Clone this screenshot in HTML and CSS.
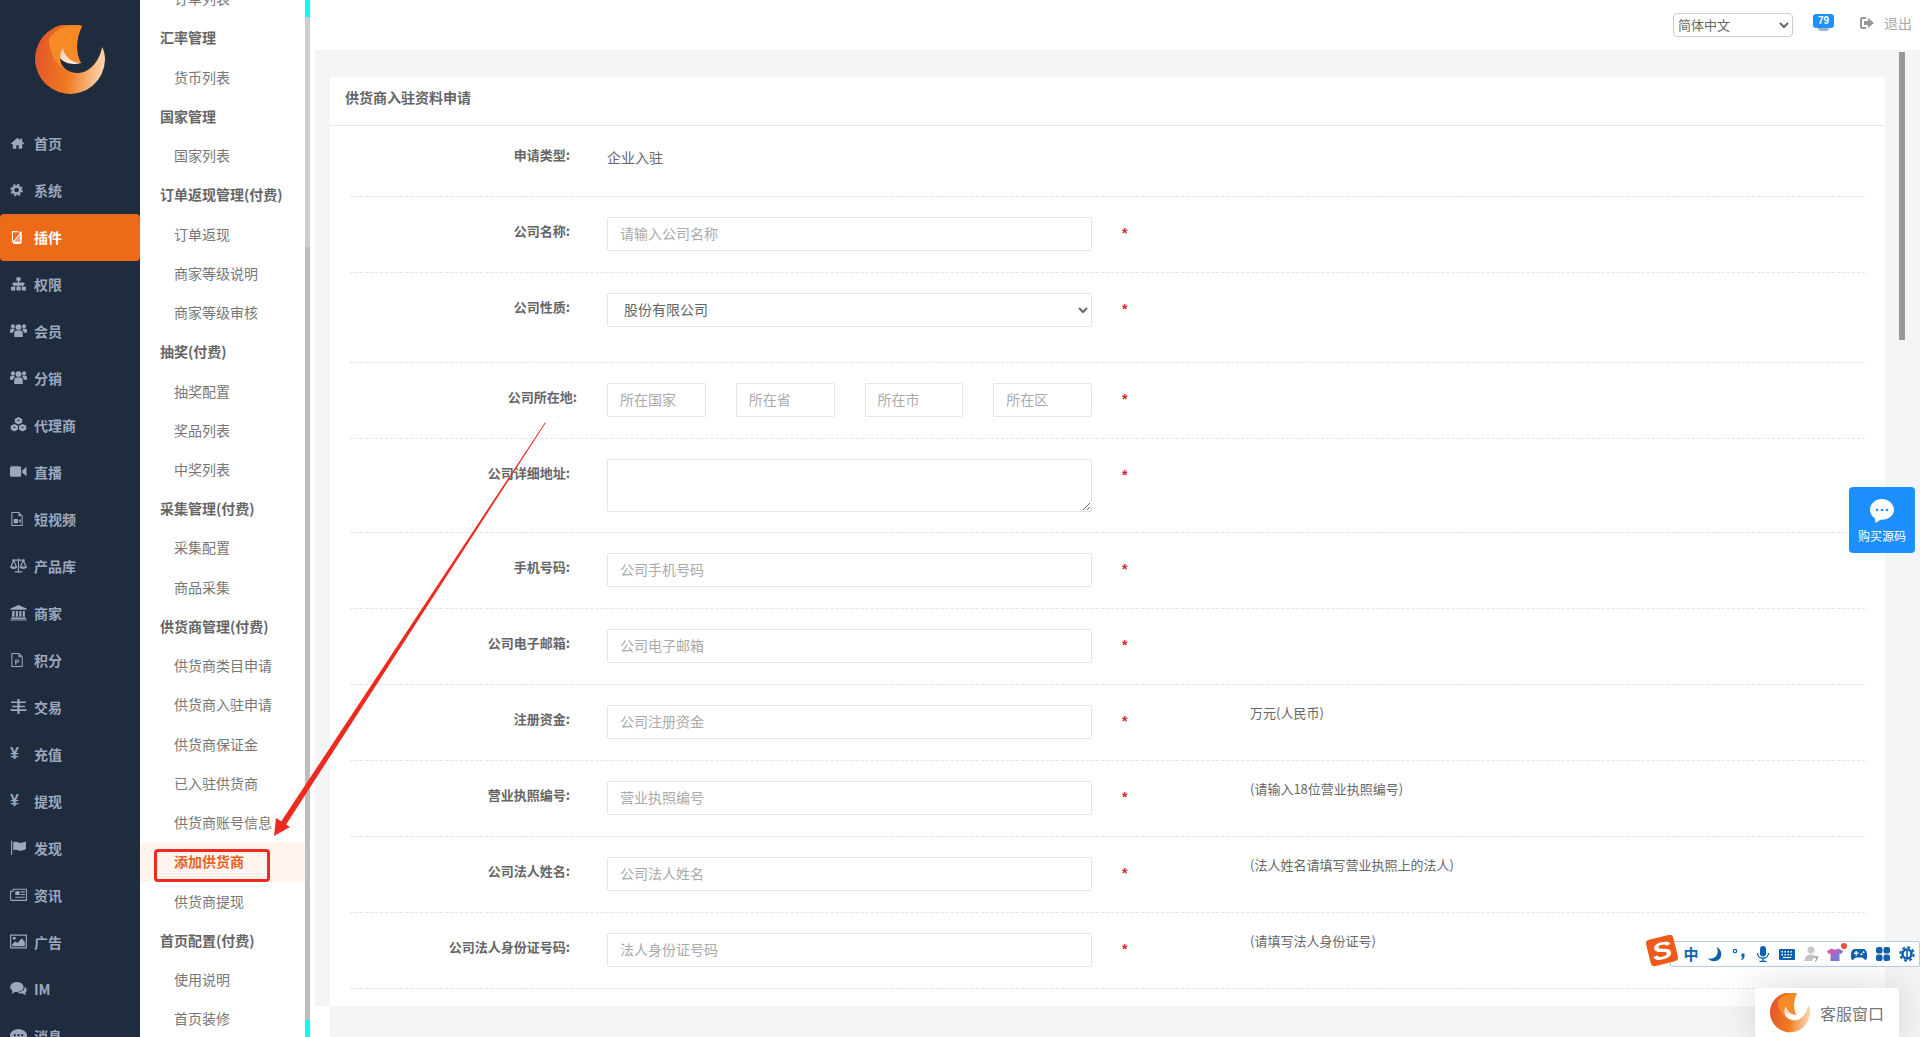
FILE: index.html
```html
<!DOCTYPE html>
<html lang="zh-CN">
<head>
    <meta charset="UTF-8">
    <title>供货商入驻资料申请</title>
    <link rel="stylesheet" href="styles.css">
</head>
<body>
    <svg class="defs" width="0" height="0">
        <defs>
            <linearGradient id="logoBase" x1="0" y1="0.6" x2="1" y2="0.75">
                <stop offset="0" stop-color="#e2582a"/>
                <stop offset="0.5" stop-color="#f07c20"/>
                <stop offset="1" stop-color="#fcdcbc"/>
            </linearGradient>
            <linearGradient id="logoFlame" x1="0" y1="0" x2="1" y2="0.7">
                <stop offset="0" stop-color="#f9c79b"/>
                <stop offset="1" stop-color="#fff2e4"/>
            </linearGradient>
            <linearGradient id="shirt" x1="0" y1="0" x2="1" y2="1">
                <stop offset="0" stop-color="#f0509a"/>
                <stop offset="1" stop-color="#4a8cf5"/>
            </linearGradient>
            <symbol id="logo" viewBox="0 0 70 70">
                <path fill="url(#logoBase)" d="M47 1A35 35 0 1 0 70 35C70 30 69 25 67 22C65 35 55 48 43 48C33 48 25 42 25 33C25 28 26 25 28 23C30 32 38 38 46 38C41 30 40 15 47 1Z"/>
                <path fill="#f68a24" d="M47 1C33 -2 20 4 14 14C14 30 24 48 43 48C33 48 25 42 25 33C25 28 26 25 28 23C30 32 38 38 46 38C41 30 40 15 47 1Z"/>
                <path fill="url(#logoFlame)" d="M28 23C30 32 38 38 46 38C38 40 30 39 25 33C25 28 26 25 28 23Z"/>
            </symbol>
        </defs>
    </svg>

    <div class="app">
        <aside class="side">
            <div class="side-logo"><svg class="logo-big"><use href="#logo"/></svg></div>
            <a class="side-item"><svg class="ico" viewBox="0 0 16 16"><path d="M8 2.500.8 8.600l.9 1L3 8.500V14h3.700v-3.600h2.600V14H13V8.500l1.300 1.100.9-1L13 6.700V3.200h-2v1.800z"/></svg>首页</a>
            <a class="side-item"><svg class="ico" viewBox="0 0 16 16"><circle cx="7" cy="8" r="3.800" fill="none" stroke="currentColor" stroke-width="2.600"/><circle cx="7" cy="8" r="5.800" fill="none" stroke="currentColor" stroke-width="1.800" stroke-dasharray="2.500 2.050"/></svg>系统</a>
            <a class="side-item active"><svg class="ico" viewBox="0 0 16 16"><path fill="#fff" d="M2 1.500h6l1 1h3.500V14l-2 1.500H4L3 13.500H2zm1 1.500V12h1l6-7.500V3z"/><path fill="#f39a74" d="M4.500 13 10.500 5.500 11 13z"/></svg>插件</a>
            <a class="side-item"><svg class="ico ico-wide" viewBox="0 0 16 16"><path d="M6 2h4v3.500H8.500V7H13.500v2.500H12.500V11H15v3.500h-4V11h.8V10H8.500v1H10v3.500H6V11h1.500V10H4.200v1H5v3.500H1V11h2.500V9.500h-1V7H7.500V5.500H6z"/></svg>权限</a>
            <a class="side-item"><svg class="ico ico-wide" viewBox="0 0 16 16"><circle cx="8" cy="4.800" r="2.800"/><circle cx="2.800" cy="4" r="1.900"/><circle cx="13.200" cy="4" r="1.900"/><path d="M4 14V10.500C4 8.500 5.500 8 6 8h4c.5 0 2 .5 2 2.500V14zM0 10V8c0-1.200 1-2 2-2h2l.5 1.500C3.500 8 3 9 3 10zM16 10V8c0-1.200-1-2-2-2h-2l-.5 1.500c1 .5 1.500 1.500 1.500 2.500z"/></svg>会员</a>
            <a class="side-item"><svg class="ico ico-wide" viewBox="0 0 16 16"><circle cx="8" cy="4.800" r="2.800"/><circle cx="2.800" cy="4" r="1.900"/><circle cx="13.200" cy="4" r="1.900"/><path d="M4 14V10.500C4 8.500 5.500 8 6 8h4c.5 0 2 .5 2 2.500V14zM0 10V8c0-1.200 1-2 2-2h2l.5 1.500C3.500 8 3 9 3 10zM16 10V8c0-1.200-1-2-2-2h-2l-.5 1.500c1 .5 1.500 1.500 1.500 2.500z"/></svg>分销</a>
            <a class="side-item"><svg class="ico ico-wide" viewBox="0 0 16 16"><path d="M8 1 11.500 2.800v3.400L8 8 4.500 6.200V2.800zM4.200 7.500 7.500 9.200v3.500l-3.300 1.800L.7 12.700V9.200zM11.800 7.500l3.500 1.700v3.500l-3.500 1.800-3.300-1.800V9.200z"/><path fill="#1e2c3d" d="M8 3.200 9.500 4 8 4.800 6.500 4zM4.200 9.800l1.400.7-1.400.8-1.500-.8zM11.800 9.800l1.500.7-1.500.8-1.400-.8z"/></svg>代理商</a>
            <a class="side-item"><svg class="ico ico-wide" viewBox="0 0 16 16"><rect x="0" y="3" width="10.500" height="10" rx="1.500"/><path d="M11.500 7 15.500 3.500v9L11.500 9z"/></svg>直播</a>
            <a class="side-item"><svg class="ico" viewBox="0 0 16 16"><path fill="none" stroke="currentColor" stroke-width="1.100" d="M2 1h7.500L13 4.500V15H2z"/><path d="M9 1.500V5h3.500zM4 8h4.500v4.500H4zM9 10l2.500-2v4.500z"/></svg>短视频</a>
            <a class="side-item"><svg class="ico ico-wide" viewBox="0 0 16 16"><path fill="none" stroke="currentColor" stroke-width="1.100" d="M8 1.500V14M4.500 14h7M2 3h12M3.500 3 .8 9.500h5.400zM12.500 3 9.800 9.500h5.400zM.8 9.500c.6 1.800 4.800 1.800 5.400 0M9.800 9.500c.6 1.800 4.800 1.800 5.400 0"/></svg>产品库</a>
            <a class="side-item"><svg class="ico ico-wide" viewBox="0 0 16 16"><path d="M8 1 15.500 4.200V5.500H.5V4.200zM2 6.500h2.200v5.500H2zM5.500 6.500h2v5.500h-2zM8.700 6.500h2v5.500h-2zM12 6.500h2v5.500h-2zM1 12.800h14V14H1zM.2 14.500h15.600V15.500H.2z"/></svg>商家</a>
            <a class="side-item"><svg class="ico" viewBox="0 0 16 16"><path fill="none" stroke="currentColor" stroke-width="1.100" d="M2 1h7.500L13 4.500V15H2z"/><path d="M9 1.500V5h3.500zM5.500 7.500h2.600c2.200 0 2.200 3.300 0 3.300H6.700v2.200H5.500zM6.700 8.500v1.300h1.300c.8 0 .8-1.300 0-1.300z"/></svg>积分</a>
            <a class="side-item"><svg class="ico ico-wide" viewBox="0 0 16 16"><path d="M1 3.200h14v1.600H1zM2 7.200h12v1.600H2zM.5 10.700h15v1.600H.5zM7 1h2v14H7z"/></svg>交易</a>
            <a class="side-item"><span class="ico-glyph">¥</span>充值</a>
            <a class="side-item"><span class="ico-glyph">¥</span>提现</a>
            <a class="side-item"><svg class="ico ico-wide" viewBox="0 0 16 16"><path d="M1 1.500h1V15H1zM3 3c3-1.500 5 1 8 .5 1.500-.2 3-.8 4-1.200v7.200c-1 .6-2.500 1.300-4 1.500-3 .4-5-2-8-.5z"/></svg>发现</a>
            <a class="side-item"><svg class="ico ico-wide" viewBox="0 0 16 16"><path fill="none" stroke="currentColor" stroke-width="1" d="M3 3h12.500v10.500H1.500a1 1 0 0 1-1-1V5h2.500z"/><path d="M5 5h4v3.500H5zM10 5h4v1h-4zM10 7.500h4v1h-4zM5 10h9v1H5z"/></svg>资讯</a>
            <a class="side-item"><svg class="ico ico-wide" viewBox="0 0 16 16"><path fill="none" stroke="currentColor" stroke-width="1.100" d="M.6 2h14.800v12H.6z"/><circle cx="4" cy="5" r="1.400"/><path d="M2 12.500V10.500L5 8l2 1.500L11 5l3 3.500v4z"/></svg>广告</a>
            <a class="side-item"><svg class="ico ico-wide" viewBox="0 0 16 16"><ellipse cx="6.500" cy="6.500" rx="6.300" ry="4.700"/><path d="M2.500 9.500 1.500 13 6 10.500zM14 6.200c2 1.600 2.200 4.400.3 5.800l.7 2.500-3-1.800c-2 .3-3.800-.3-4.800-1.200 3.500 0 7-2 6.800-5.300z"/></svg>IM</a>
            <a class="side-item"><svg class="ico ico-wide" viewBox="0 0 16 16"><path fill-rule="evenodd" d="M8 2c4.400 0 8 2.500 8 5.700s-3.600 5.700-8 5.700c-.9 0-1.800-.1-2.600-.3L1.500 15l1-3.200C1 10.700 0 9.300 0 7.700 0 4.500 3.600 2 8 2zM4.500 6.700a1 1 0 1 0 0 2 1 1 0 0 0 0-2zm3.500 0a1 1 0 1 0 0 2 1 1 0 0 0 0-2zm3.500 0a1 1 0 1 0 0 2 1 1 0 0 0 0-2z"/></svg>消息</a>
        </aside>

        <nav class="subnav">
            <div class="sub-list">
                <a class="sub-item">订单列表</a>
                <div class="sub-head">汇率管理</div>
                <a class="sub-item">货币列表</a>
                <div class="sub-head">国家管理</div>
                <a class="sub-item">国家列表</a>
                <div class="sub-head">订单返现管理(付费)</div>
                <a class="sub-item">订单返现</a>
                <a class="sub-item">商家等级说明</a>
                <a class="sub-item">商家等级审核</a>
                <div class="sub-head">抽奖(付费)</div>
                <a class="sub-item">抽奖配置</a>
                <a class="sub-item">奖品列表</a>
                <a class="sub-item">中奖列表</a>
                <div class="sub-head">采集管理(付费)</div>
                <a class="sub-item">采集配置</a>
                <a class="sub-item">商品采集</a>
                <div class="sub-head">供货商管理(付费)</div>
                <a class="sub-item">供货商类目申请</a>
                <a class="sub-item">供货商入驻申请</a>
                <a class="sub-item">供货商保证金</a>
                <a class="sub-item">已入驻供货商</a>
                <a class="sub-item">供货商账号信息</a>
                <a class="sub-item current">添加供货商</a>
                <a class="sub-item">供货商提现</a>
                <div class="sub-head">首页配置(付费)</div>
                <a class="sub-item">使用说明</a>
                <a class="sub-item">首页装修</a>
            </div>
            <div class="sub-bar"><span class="sub-cap"></span><span class="sub-thumb"></span><span class="sub-cap"></span></div>
        </nav>

        <div class="main">
            <header class="topbar">
                <select class="lang"><option>简体中文</option></select>
                <span class="msg"><b class="msg-count">79</b></span>
                <span class="logout">
                    <svg class="logout-ico" viewBox="0 0 16 16"><path d="M7 2H3a2 2 0 0 0-2 2v8a2 2 0 0 0 2 2h4v-2H3V4h4z"/><path d="M9 3v3H5v4h4v3l6-5z"/></svg>
                    退出
                </span>
            </header>

            <div class="page">
                <section class="card">
                    <h2 class="card-title">供货商入驻资料申请</h2>
                    <div class="row row-first">
                        <label class="label">申请类型:</label>
                        <div class="field field-text">企业入驻</div>
                    </div>
                    <div class="row">
                        <label class="label">公司名称:</label>
                        <div class="field"><input class="input" placeholder="请输入公司名称"></div>
                        <span class="star">*</span>
                    </div>
                    <div class="row row-tall">
                        <label class="label">公司性质:</label>
                        <div class="field"><select class="input select"><option>股份有限公司</option></select></div>
                        <span class="star">*</span>
                    </div>
                    <div class="row">
                        <label class="label label-wide">公司所在地:</label>
                        <div class="field field-split">
                            <input class="input" placeholder="所在国家">
                            <input class="input" placeholder="所在省">
                            <input class="input" placeholder="所在市">
                            <input class="input" placeholder="所在区">
                        </div>
                        <span class="star">*</span>
                    </div>
                    <div class="row row-area">
                        <label class="label">公司详细地址:</label>
                        <div class="field"><textarea class="input area"></textarea></div>
                        <span class="star">*</span>
                    </div>
                    <div class="row">
                        <label class="label">手机号码:</label>
                        <div class="field"><input class="input" placeholder="公司手机号码"></div>
                        <span class="star">*</span>
                    </div>
                    <div class="row">
                        <label class="label">公司电子邮箱:</label>
                        <div class="field"><input class="input" placeholder="公司电子邮箱"></div>
                        <span class="star">*</span>
                    </div>
                    <div class="row">
                        <label class="label">注册资金:</label>
                        <div class="field"><input class="input" placeholder="公司注册资金"></div>
                        <span class="star">*</span>
                        <span class="note">万元(人民币)</span>
                    </div>
                    <div class="row">
                        <label class="label">营业执照编号:</label>
                        <div class="field"><input class="input" placeholder="营业执照编号"></div>
                        <span class="star">*</span>
                        <span class="note">(请输入18位营业执照编号)</span>
                    </div>
                    <div class="row">
                        <label class="label">公司法人姓名:</label>
                        <div class="field"><input class="input" placeholder="公司法人姓名"></div>
                        <span class="star">*</span>
                        <span class="note">(法人姓名请填写营业执照上的法人)</span>
                    </div>
                    <div class="row">
                        <label class="label">公司法人身份证号码:</label>
                        <div class="field"><input class="input" placeholder="法人身份证号码"></div>
                        <span class="star">*</span>
                        <span class="note">(请填写法人身份证号)</span>
                    </div>
                </section>
                <div class="page-scroll"></div>
            </div>
            <div class="page-foot"></div>
        </div>
    </div>

    <!-- 标注箭头 -->
    <svg class="arrow" viewBox="0 0 300 430">
        <path fill="#ee2a1e" d="M285 0.500 285.700 1 24.500 405 19.500 402z"/>
        <path fill="#ee2a1e" d="M14 414 16 396 30 405z"/>
    </svg>
    <div class="mark"></div>

    <div class="buy">
        <svg class="buy-ico" viewBox="0 0 26 26"><path fill="#fff" d="M13 1C6.400 1 1 5.800 1 11.800c0 3.600 2 6.800 5 8.700L6.500 25l5-3.300c.5.100 1 .1 1.500.1 6.600 0 12-4.500 12-10S19.600 1 13 1z"/><circle cx="8" cy="12" r="1.300" fill="#1e8fff"/><circle cx="13" cy="12" r="1.300" fill="#1e8fff"/><circle cx="18" cy="12" r="1.300" fill="#1e8fff"/></svg>
        <span>购买源码</span>
    </div>

    <div class="ime">
        <span class="ime-logo"><b class="ime-s">S</b></span>
        <div class="ime-bar">
            <span class="ime-cell ime-zh">中</span>
            <span class="ime-cell"><svg viewBox="0 0 16 16"><path d="M10 1c5 3 5.500 9 2.500 12S4 16 1 12.500c3 .5 6.500 0 8.500-3S10.500 4 10 1z"/></svg></span>
            <span class="ime-cell"><svg viewBox="0 0 16 16"><circle cx="4" cy="5" r="1.700" fill="none" stroke="#0d62b0" stroke-width="1.200"/><path d="M10.500 7.500h3v2.500c0 2-1 3.500-2.800 4l-.6-.9c1-.5 1.500-1 1.500-2h-1.100z"/></svg></span>
            <span class="ime-cell"><svg viewBox="0 0 16 16"><rect x="5" y="0" width="6" height="10.500" rx="3"/><path fill="none" stroke="#0d62b0" stroke-width="1.300" d="M2.500 7c0 7 11 7 11 0M8 12.500V15.500M4.500 15.500h7"/></svg></span>
            <span class="ime-cell"><svg viewBox="0 0 16 16"><path fill-rule="evenodd" d="M1 3h14a1 1 0 0 1 1 1v9a1 1 0 0 1-1 1H1a1 1 0 0 1-1-1V4a1 1 0 0 1 1-1zm1.500 2v1.500H4V5zm3 0v1.500H7V5zm3 0v1.500H10V5zm3 0v1.500H13V5zm-9 3v1.500H4V8zm3 0v1.500H7V8zm3 0v1.500H10V8zm3 0v1.500H13V8zM4 11v1h8v-1z"/></svg></span>
            <span class="ime-cell ime-grey"><svg viewBox="0 0 16 16"><circle cx="8" cy="4" r="3.500"/><path d="M1.500 15c0-4 2.500-6.500 6.500-6.500 1.500 0 2.500.3 3.500 1L9 15z"/><path fill="#8a8a8a" d="M10.500 10.500h5l-2.500 5h-1.200l2-3.800h-3.300z"/></svg></span>
            <span class="ime-cell ime-dot"><svg viewBox="0 0 16 16"><path fill="url(#shirt)" d="M4.500 2.500c2 1.500 5 1.500 7 0L16 5l-1.500 3-2-.8V15h-9V7.200l-2 .8L0 5z"/></svg></span>
            <span class="ime-cell"><svg viewBox="0 0 16 16"><path fill-rule="evenodd" d="M4 3h8c2.500 0 4 2 4 5s0 6-1.500 6-2-2.500-3.500-2.500H5C3.500 11.500 3 14 1.500 14S0 11 0 8s1.500-5 4-5zm.500 2v1.500H3V8h1.500v1.500H6V8h1.500V6.500H6V5zm6 2.200a1 1 0 1 0 0 2 1 1 0 0 0 0-2zm2-2a1 1 0 1 0 0 2 1 1 0 0 0 0-2z"/></svg></span>
            <span class="ime-cell"><svg viewBox="0 0 16 16"><rect x="1" y="1" width="6.500" height="6.500" rx="2"/><rect x="8.500" y="1" width="6.500" height="6.500" rx="2"/><rect x="1" y="8.500" width="6.500" height="6.500" rx="2"/><rect x="8.500" y="8.500" width="6.500" height="6.500" rx="2"/></svg></span>
            <span class="ime-cell"><svg viewBox="0 0 16 16"><circle cx="8" cy="8" r="4.500" fill="none" stroke="#0d62b0" stroke-width="2.600"/><circle cx="8" cy="8" r="6.700" fill="none" stroke="#0d62b0" stroke-width="2" stroke-dasharray="3 2.260"/><rect x="7.200" y="5" width="1.600" height="8" /></svg></span>
        </div>
    </div>

    <div class="service">
        <svg class="service-logo"><use href="#logo"/></svg>
        <span>客服窗口</span>
    </div>
</body>
</html>
```

FILE: styles.css
```css
* {
    box-sizing: border-box;
}

html, body {
    margin: 0;
    height: 100%;
    overflow: hidden;
    background-color: #fff;
}

body {
    position: relative;
    font-family: "Noto Sans CJK SC", "Noto Sans", sans-serif;
    font-size: 14px;
    color: #666;
}

.defs {
    position: absolute;
}

.app {
    display: flex;
    height: 1037px;
}

/* 左侧主菜单 */
.side {
    width: 140px;
    flex-shrink: 0;
    background-color: #1e2c3d;
    color: #9ba8bf;
    overflow: hidden;
}

.side-logo {
    height: 120px;
    padding: 25px 0 0 35px;
}

.logo-big {
    display: block;
    width: 70px;
    height: 70px;
}

.side-item {
    display: flex;
    align-items: center;
    height: 47px;
    padding: 0 0 2px 10px;
    font-weight: bold;
    line-height: 20px;
}

.side-item.active {
    background-color: #ec6a18;
    border-radius: 4px;
    color: #fff;
}

.ico {
    width: 15px;
    height: 16px;
    margin-right: 9px;
    fill: currentColor;
    flex-shrink: 0;
}

.ico-wide {
    width: 17px;
    height: 17px;
    margin-right: 7px;
}

.ico-glyph {
    width: 24px;
    font-size: 16px;
    font-family: "Liberation Sans", sans-serif;
}

/* 二级菜单 */
.subnav {
    display: flex;
    width: 170px;
    flex-shrink: 0;
}

.sub-list {
    width: 165px;
    margin-top: -20.8px;
}

.sub-head, .sub-item {
    display: block;
    height: 39.24px;
    line-height: 39px;
    white-space: nowrap;
}

.sub-head {
    padding-left: 20px;
    font-weight: bold;
}

.sub-item {
    padding-left: 34px;
    color: #777;
}

.sub-item.current {
    background-color: #fff5ee;
    color: #e8632a;
    font-weight: bold;
}

.sub-bar {
    display: flex;
    flex-direction: column;
    width: 5px;
}

.sub-cap {
    height: 17px;
    background-color: #00ffff;
}

.sub-thumb {
    flex: 1;
    background: linear-gradient(#cdcdcd 0, #cdcdcd 230px, #bdbdbd 230px);
}

/* 右侧内容 */
.main {
    position: relative;
    flex: 1;
    display: flex;
    flex-direction: column;
    min-width: 0;
}

.topbar {
    display: flex;
    align-items: flex-start;
    justify-content: flex-end;
    height: 50px;
    padding: 13px 8px 0 0;
}

.lang {
    width: 120px;
    height: 24px;
    padding: 0 0 4px;
    border: 1px solid #ccc;
    border-radius: 4px;
    background-color: #fff;
    font: 13px "Noto Sans CJK SC", sans-serif;
    color: #666;
}

.msg {
    margin-left: 20px;
    padding-top: 1px;
}

.msg-count {
    position: relative;
    display: block;
    width: 21px;
    height: 14px;
    background-color: #1e90ff;
    border-radius: 3px;
    color: #fff;
    font: bold 10px/14px "Liberation Sans", sans-serif;
    text-align: center;
}

.msg-count::after {
    content: "";
    position: absolute;
    left: 5px;
    bottom: -3px;
    width: 11px;
    height: 3px;
    border-radius: 0 0 3px 3px;
    background-color: #9fb4c9;
}

.logout {
    display: flex;
    align-items: center;
    height: 20px;
    margin-left: 25px;
    color: #aaa;
}

.logout-ico {
    width: 16px;
    height: 16px;
    margin-right: 9px;
    fill: #999;
}

.page {
    position: relative;
    flex: 1;
    margin-left: 5px;
    padding: 27px 35px 0 15px;
    background-color: #f4f5f7;
}

.page-foot {
    height: 31px;
    margin-left: 20px;
    background-color: #f4f5f7;
}

.page-scroll {
    position: absolute;
    top: 2px;
    right: 15px;
    width: 6px;
    height: 288px;
    background-color: #999;
}

.card {
    height: 929px;
    padding: 0 20px;
    background-color: #fff;
}

.card-title {
    height: 49px;
    margin: 0 -20px;
    padding-left: 15px;
    border-bottom: 1px solid #e8e8e8;
    font-size: 14px;
    line-height: 40px;
    color: #666;
}

.row {
    display: flex;
    align-items: flex-start;
    padding: 20px 0 21px;
    border-bottom: 1px dashed #e5e5e5;
}

.row-first {
    height: 71px;
    padding-top: 15px;
}

.row-tall {
    padding-bottom: 35px;
}

.row-area {
    padding-bottom: 20px;
}

.label {
    width: 220px;
    flex-shrink: 0;
    font-size: 13px;
    font-weight: bold;
    line-height: 28px;
    text-align: right;
    white-space: nowrap;
}

.label-wide {
    width: 227px;
    margin-right: -7px;
}

.field {
    width: 485px;
    margin-left: 37px;
    flex-shrink: 0;
}

.field-text {
    line-height: 34px;
    margin-top: -1px;
}

.field-split {
    display: flex;
    gap: 30px;
}

.input {
    display: block;
    width: 100%;
    height: 34px;
    padding: 0 12px 2px;
    border: 1px solid #e5e5e5;
    border-radius: 2px;
    background-color: #fff;
    font: 14px "Noto Sans CJK SC", sans-serif;
    color: #666;
    outline: none;
}

.field-split .input {
    flex: 1;
    min-width: 0;
}

.input::placeholder {
    color: #aaa;
}

.area {
    height: 53px;
    padding: 6px 12px;
}

.star {
    width: 128px;
    margin-left: 30px;
    flex-shrink: 0;
    color: #d9242b;
    font: bold 14px/32px "Liberation Sans", sans-serif;
}

.note {
    margin-top: -1px;
    font-size: 13px;
    line-height: 18px;
}

/* 悬浮层 */
.arrow {
    position: absolute;
    left: 260px;
    top: 422px;
    width: 300px;
    height: 430px;
}

.mark {
    position: absolute;
    left: 154px;
    top: 849px;
    width: 116px;
    height: 33px;
    border: 3px solid #ee2a1e;
    border-radius: 4px;
}

.buy {
    position: absolute;
    left: 1849px;
    top: 487px;
    display: flex;
    flex-direction: column;
    align-items: center;
    width: 66px;
    height: 66px;
    padding-top: 11px;
    background-color: #1e8fff;
    border-radius: 4px;
    color: #fff;
    font-size: 12px;
    line-height: 18px;
}

.buy-ico {
    display: block;
    width: 26px;
    height: 26px;
    margin-bottom: 3px;
}

.ime {
    position: absolute;
    left: 1647px;
    top: 937px;
    width: 273px;
    height: 30px;
}

.ime-logo {
    position: absolute;
    z-index: 1;
    left: 1px;
    top: 0;
    display: flex;
    align-items: center;
    justify-content: center;
    width: 28px;
    height: 27px;
    background-color: #ef5a1c;
    border-radius: 4px;
    transform: rotate(-14deg);
    color: #fff;
    font: italic bold 24px/27px "Liberation Sans", sans-serif;
}

.ime-s {
    display: inline-block;
    transform: scaleX(1.25);
}

.ime-bar {
    position: absolute;
    left: 23px;
    top: 4px;
    display: flex;
    align-items: center;
    width: 250px;
    height: 26px;
    padding-left: 8px;
    background-color: #fff;
    border: 1px solid #b8cde0;
    border-radius: 2px;
}

.ime-cell {
    position: relative;
    display: flex;
    justify-content: center;
    width: 24px;
    color: #0d62b0;
    font-size: 15px;
    font-weight: bold;
    line-height: 16px;
}

.ime-cell svg {
    width: 16px;
    height: 16px;
    fill: #0d62b0;
}

.ime-cell.ime-grey svg {
    fill: #c8c8c8;
}

.ime-dot::after {
    content: "";
    position: absolute;
    right: 0;
    top: -3px;
    width: 6px;
    height: 6px;
    border-radius: 50%;
    background-color: #e8503a;
}

.service {
    position: absolute;
    left: 1755px;
    top: 988px;
    display: flex;
    align-items: center;
    width: 144px;
    height: 49px;
    padding-left: 15px;
    background-color: #fff;
    border-radius: 3px 3px 0 0;
    box-shadow: 0 0 40px rgba(0, 0, 0, 0.16);
    font-size: 16px;
    color: #777;
}

.service-logo {
    width: 40px;
    height: 40px;
    margin-right: 10px;
    flex-shrink: 0;
}
```
